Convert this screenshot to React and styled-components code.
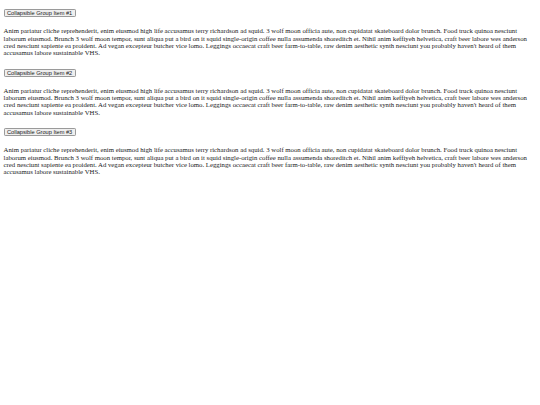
import React from "react";
import styled, { createGlobalStyle } from "styled-components";

const GlobalStyle = createGlobalStyle`
  html, body {
    margin: 0;
    padding: 0;
    background: #ffffff;
  }
`;

const StyledPage = styled.div`
  display: flex;
  flex-direction: column;
  gap: 12.3px;
  padding: 9.2px 3.6px 0 3.6px;
  font-family: "Liberation Serif", "Times New Roman", serif;
  color: #1a1a1a;
`;

const StyledGroup = styled.div`
  display: flex;
  flex-direction: column;
  align-items: flex-start;
  gap: 10px;
`;

const StyledToggle = styled.button`
  font-family: "Liberation Sans", Arial, sans-serif;
  font-size: 5.65px;
  line-height: 6px;
  padding: 0 2.4px;
  margin: 0;
  color: #1a1a1a;
  background-color: #efefef;
  border: 0.8px solid #9a9a9a;
  border-radius: 1.2px;
  cursor: pointer;
`;

const StyledPanel = styled.div`
  font-size: 6.75px;
  line-height: 7.33px;
  display: ${props => (props.open ? "block" : "none")};
`;

const text =
  "Anim pariatur cliche reprehenderit, enim eiusmod high life accusamus terry richardson ad squid. 3 wolf moon officia aute, non cupidatat skateboard dolor brunch. Food truck quinoa nesciunt laborum eiusmod. Brunch 3 wolf moon tempor, sunt aliqua put a bird on it squid single-origin coffee nulla assumenda shoreditch et. Nihil anim keffiyeh helvetica, craft beer labore wes anderson cred nesciunt sapiente ea proident. Ad vegan excepteur butcher vice lomo. Leggings occaecat craft beer farm-to-table, raw denim aesthetic synth nesciunt you probably haven't heard of them accusamus labore sustainable VHS.";

const groups = [
  { id: 1, title: "Collapsible Group Item #1" },
  { id: 2, title: "Collapsible Group Item #2" },
  { id: 3, title: "Collapsible Group Item #3" }
];

export default function App() {
  const [open, setOpen] = React.useState({ 1: true, 2: true, 3: true });
  const toggle = id => setOpen(prev => ({ ...prev, [id]: !prev[id] }));
  return (
    <>
      <GlobalStyle />
      <StyledPage>
        {groups.map(group => (
          <StyledGroup key={group.id}>
            <StyledToggle onClick={() => toggle(group.id)}>
              {group.title}
            </StyledToggle>
            <StyledPanel open={open[group.id]}>{text}</StyledPanel>
          </StyledGroup>
        ))}
      </StyledPage>
    </>
  );
}
